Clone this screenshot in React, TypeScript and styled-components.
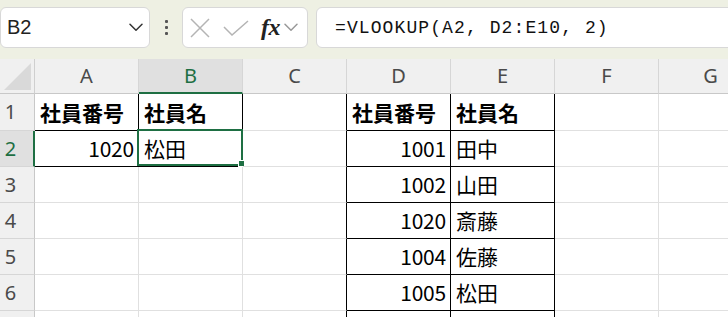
import React from 'react';
import styled, { createGlobalStyle } from 'styled-components';

const GREEN = '#1e6f43';

const Global = createGlobalStyle`
  html, body { margin: 0; padding: 0; background: #fff; overflow: hidden; }
  * { box-sizing: border-box; }
`;

const Page = styled.div`
  width: 728px;
  height: 317px;
  overflow: hidden;
  display: flex;
  flex-direction: column;
  background: #fff;
`;

const Toolbar = styled.div`
  flex: 0 0 59px;
  height: 59px;
  background: #eef0e3;
  display: flex;
  align-items: flex-start;
  padding-top: 7px;
  overflow: hidden;
`;

const NameBox = styled.div`
  flex: 0 0 150px;
  height: 41px;
  background: #fff;
  border: 1px solid #d8d8d8;
  border-radius: 6px;
  display: flex;
  align-items: center;
  justify-content: space-between;
  padding: 0 6px 0 6px;
  font-family: "Liberation Sans", Arial, sans-serif;
  font-size: 20px;
  color: #222;
`;

const Dots = styled.div`
  flex: 0 0 32px;
  height: 41px;
  display: flex;
  flex-direction: column;
  align-items: center;
  justify-content: center;
  gap: 3px;
`;

const Dot = styled.span`
  width: 3px;
  height: 3px;
  border-radius: 1px;
  background: #555;
`;

const IconBox = styled.div`
  flex: 0 0 126px;
  height: 41px;
  background: #fff;
  border: 1px solid #d8d8d8;
  border-radius: 6px;
  display: flex;
  align-items: center;
  padding-left: 7px;
`;

const Fx = styled.span`
  font-family: "Liberation Serif", "Times New Roman", serif;
  font-style: italic;
  font-weight: 700;
  font-size: 24px;
  color: #222;
  margin-left: 12px;
  letter-spacing: -0.5px;
`;

const FxChevron = styled.span`
  margin-left: 4px;
  display: flex;
`;

const FormulaBox = styled.div`
  flex: 0 0 430px;
  margin-left: 8px;
  height: 41px;
  background: #fff;
  border: 1px solid #d8d8d8;
  border-radius: 6px;
  display: flex;
  align-items: center;
  padding-left: 18px;
  font-family: "Liberation Mono", "DejaVu Sans Mono", monospace;
  font-size: 18px;
  letter-spacing: 1.1px;
  color: #111;
  white-space: pre;
`;

const Sheet = styled.div`
  display: grid;
  grid-template-columns: 35px repeat(7, 104px);
  grid-template-rows: 35px 37px repeat(6, 36px);
  width: 763px;
`;

const Corner = styled.div`
  background: #f0f0f0;
  border-right: 1px solid #cfcfcf;
  border-bottom: 1px solid #c8c8c8;
  display: flex;
`;

const ColHeader = styled.div<{ $sel?: boolean }>`
  background: ${(p) => (p.$sel ? '#e0e0e0' : '#f0f0f0')};
  border-right: 1px solid #d6d6d6;
  border-bottom: ${(p) => (p.$sel ? `2px solid ${GREEN}` : '1px solid #c8c8c8')};
  display: flex;
  align-items: center;
  justify-content: center;
  font-family: "Noto Sans", "Open Sans", sans-serif;
  font-size: 20px;
  line-height: 1;
  color: ${(p) => (p.$sel ? GREEN : '#4a4a4a')};
`;

const RowHeader = styled.div<{ $sel?: boolean }>`
  background: ${(p) => (p.$sel ? '#e0e0e0' : '#f0f0f0')};
  border-right: ${(p) => (p.$sel ? `2px solid ${GREEN}` : '1px solid #c8c8c8')};
  border-bottom: 1px solid #d6d6d6;
  display: flex;
  align-items: center;
  justify-content: center;
  padding-right: ${(p) => (p.$sel ? 12 : 13)}px;
  font-family: "Noto Sans", "Open Sans", sans-serif;
  font-size: 20px;
  line-height: 1;
  color: ${(p) => (p.$sel ? GREEN : '#4a4a4a')};
`;

const Cell = styled.div<{ $right: boolean; $bottom: boolean; $num?: boolean; $bold?: boolean }>`
  position: relative;
  border-right: 1px solid ${(p) => (p.$right ? '#000' : '#e0e0e0')};
  border-bottom: 1px solid ${(p) => (p.$bottom ? '#000' : '#e0e0e0')};
  display: flex;
  align-items: center;
  justify-content: ${(p) => (p.$num ? 'flex-end' : 'flex-start')};
  padding: 0 4px 0 5px;
  font-family: "Noto Sans CJK JP", "Noto Sans", sans-serif;
  font-size: 21px;
  line-height: 1;
  font-weight: ${(p) => (p.$bold ? 700 : 400)};
  letter-spacing: ${(p) => (p.$num ? '-0.2px' : '0')};
  color: #000;
  white-space: nowrap;
`;

const Selection = styled.div`
  position: absolute;
  top: -2px;
  left: -2px;
  right: -1px;
  bottom: 0;
  border: 2px solid ${GREEN};
  pointer-events: none;
`;

const FillHandle = styled.div`
  position: absolute;
  right: -4px;
  bottom: -3px;
  width: 7px;
  height: 7px;
  background: ${GREEN};
  border: 1px solid #fff;
`;

const COLS = ['A', 'B', 'C', 'D', 'E', 'F', 'G'];
const ROWS = [1, 2, 3, 4, 5, 6, 7];
const VISIBLE_LABEL_ROWS = 6;

type CellData = { v: string; num?: boolean; bold?: boolean };

const DATA: Record<string, CellData> = {
  A1: { v: '社員番号', bold: true },
  B1: { v: '社員名', bold: true },
  A2: { v: '1020', num: true },
  B2: { v: '松田' },
  D1: { v: '社員番号', bold: true },
  E1: { v: '社員名', bold: true },
  D2: { v: '1001', num: true },
  E2: { v: '田中' },
  D3: { v: '1002', num: true },
  E3: { v: '山田' },
  D4: { v: '1020', num: true },
  E4: { v: '斎藤' },
  D5: { v: '1004', num: true },
  E5: { v: '佐藤' },
  D6: { v: '1005', num: true },
  E6: { v: '松田' },
};

const bordered = (c: number, r: number) => {
  if (r >= 1 && r <= 2 && c >= 0 && c <= 1) return true;
  if (r >= 1 && r <= 10 && c >= 3 && c <= 4) return true;
  return false;
};

const Chevron = ({ w, color }: { w: number; color: string }) => (
  <svg width={w} height={w * 0.6} viewBox="0 0 14 8" fill="none">
    <polyline points="1,1 7,7 13,1" stroke={color} strokeWidth="1.5" strokeLinecap="round" strokeLinejoin="round" />
  </svg>
);

export default function App() {
  return (
    <Page>
      <Global />
      <Toolbar>
        <NameBox>
          <span>B2</span>
          <Chevron w={14} color="#333" />
        </NameBox>
        <Dots>
          <Dot />
          <Dot />
          <Dot />
        </Dots>
        <IconBox>
          <svg width="20" height="20" viewBox="0 0 20 20">
            <path d="M1 1 L19 19 M19 1 L1 19" stroke="#b4b4b4" strokeWidth="1.5" />
          </svg>
          <svg width="26" height="16" viewBox="0 0 26 16" style={{ marginLeft: 13 }}>
            <polyline points="1,7 9,15 25,1" fill="none" stroke="#b4b4b4" strokeWidth="1.5" />
          </svg>
          <Fx>fx</Fx>
          <FxChevron>
            <Chevron w={14} color="#999" />
          </FxChevron>
        </IconBox>
        <FormulaBox>=VLOOKUP(A2, D2:E10, 2)</FormulaBox>
      </Toolbar>
      <Sheet>
        <Corner>
          <svg width="34" height="34" viewBox="0 0 34 34">
            <polygon points="31,4 31,31 4,31" fill="#d9d9d9" />
          </svg>
        </Corner>
        {COLS.map((c) => (
          <ColHeader key={c} $sel={c === 'B'}>
            {c}
          </ColHeader>
        ))}
        {ROWS.map((r) => (
          <React.Fragment key={r}>
            <RowHeader $sel={r === 2}>{r <= VISIBLE_LABEL_ROWS ? r : ''}</RowHeader>
            {COLS.map((c, ci) => {
              const d = DATA[c + r];
              const right = bordered(ci, r) || bordered(ci + 1, r);
              const bottom = bordered(ci, r) || bordered(ci, r + 1);
              const sel = c === 'B' && r === 2;
              return (
                <Cell key={c + r} $right={right} $bottom={bottom} $num={d?.num} $bold={d?.bold}>
                  {d?.v}
                  {sel && (
                    <Selection>
                      <FillHandle />
                    </Selection>
                  )}
                </Cell>
              );
            })}
          </React.Fragment>
        ))}
      </Sheet>
    </Page>
  );
}
